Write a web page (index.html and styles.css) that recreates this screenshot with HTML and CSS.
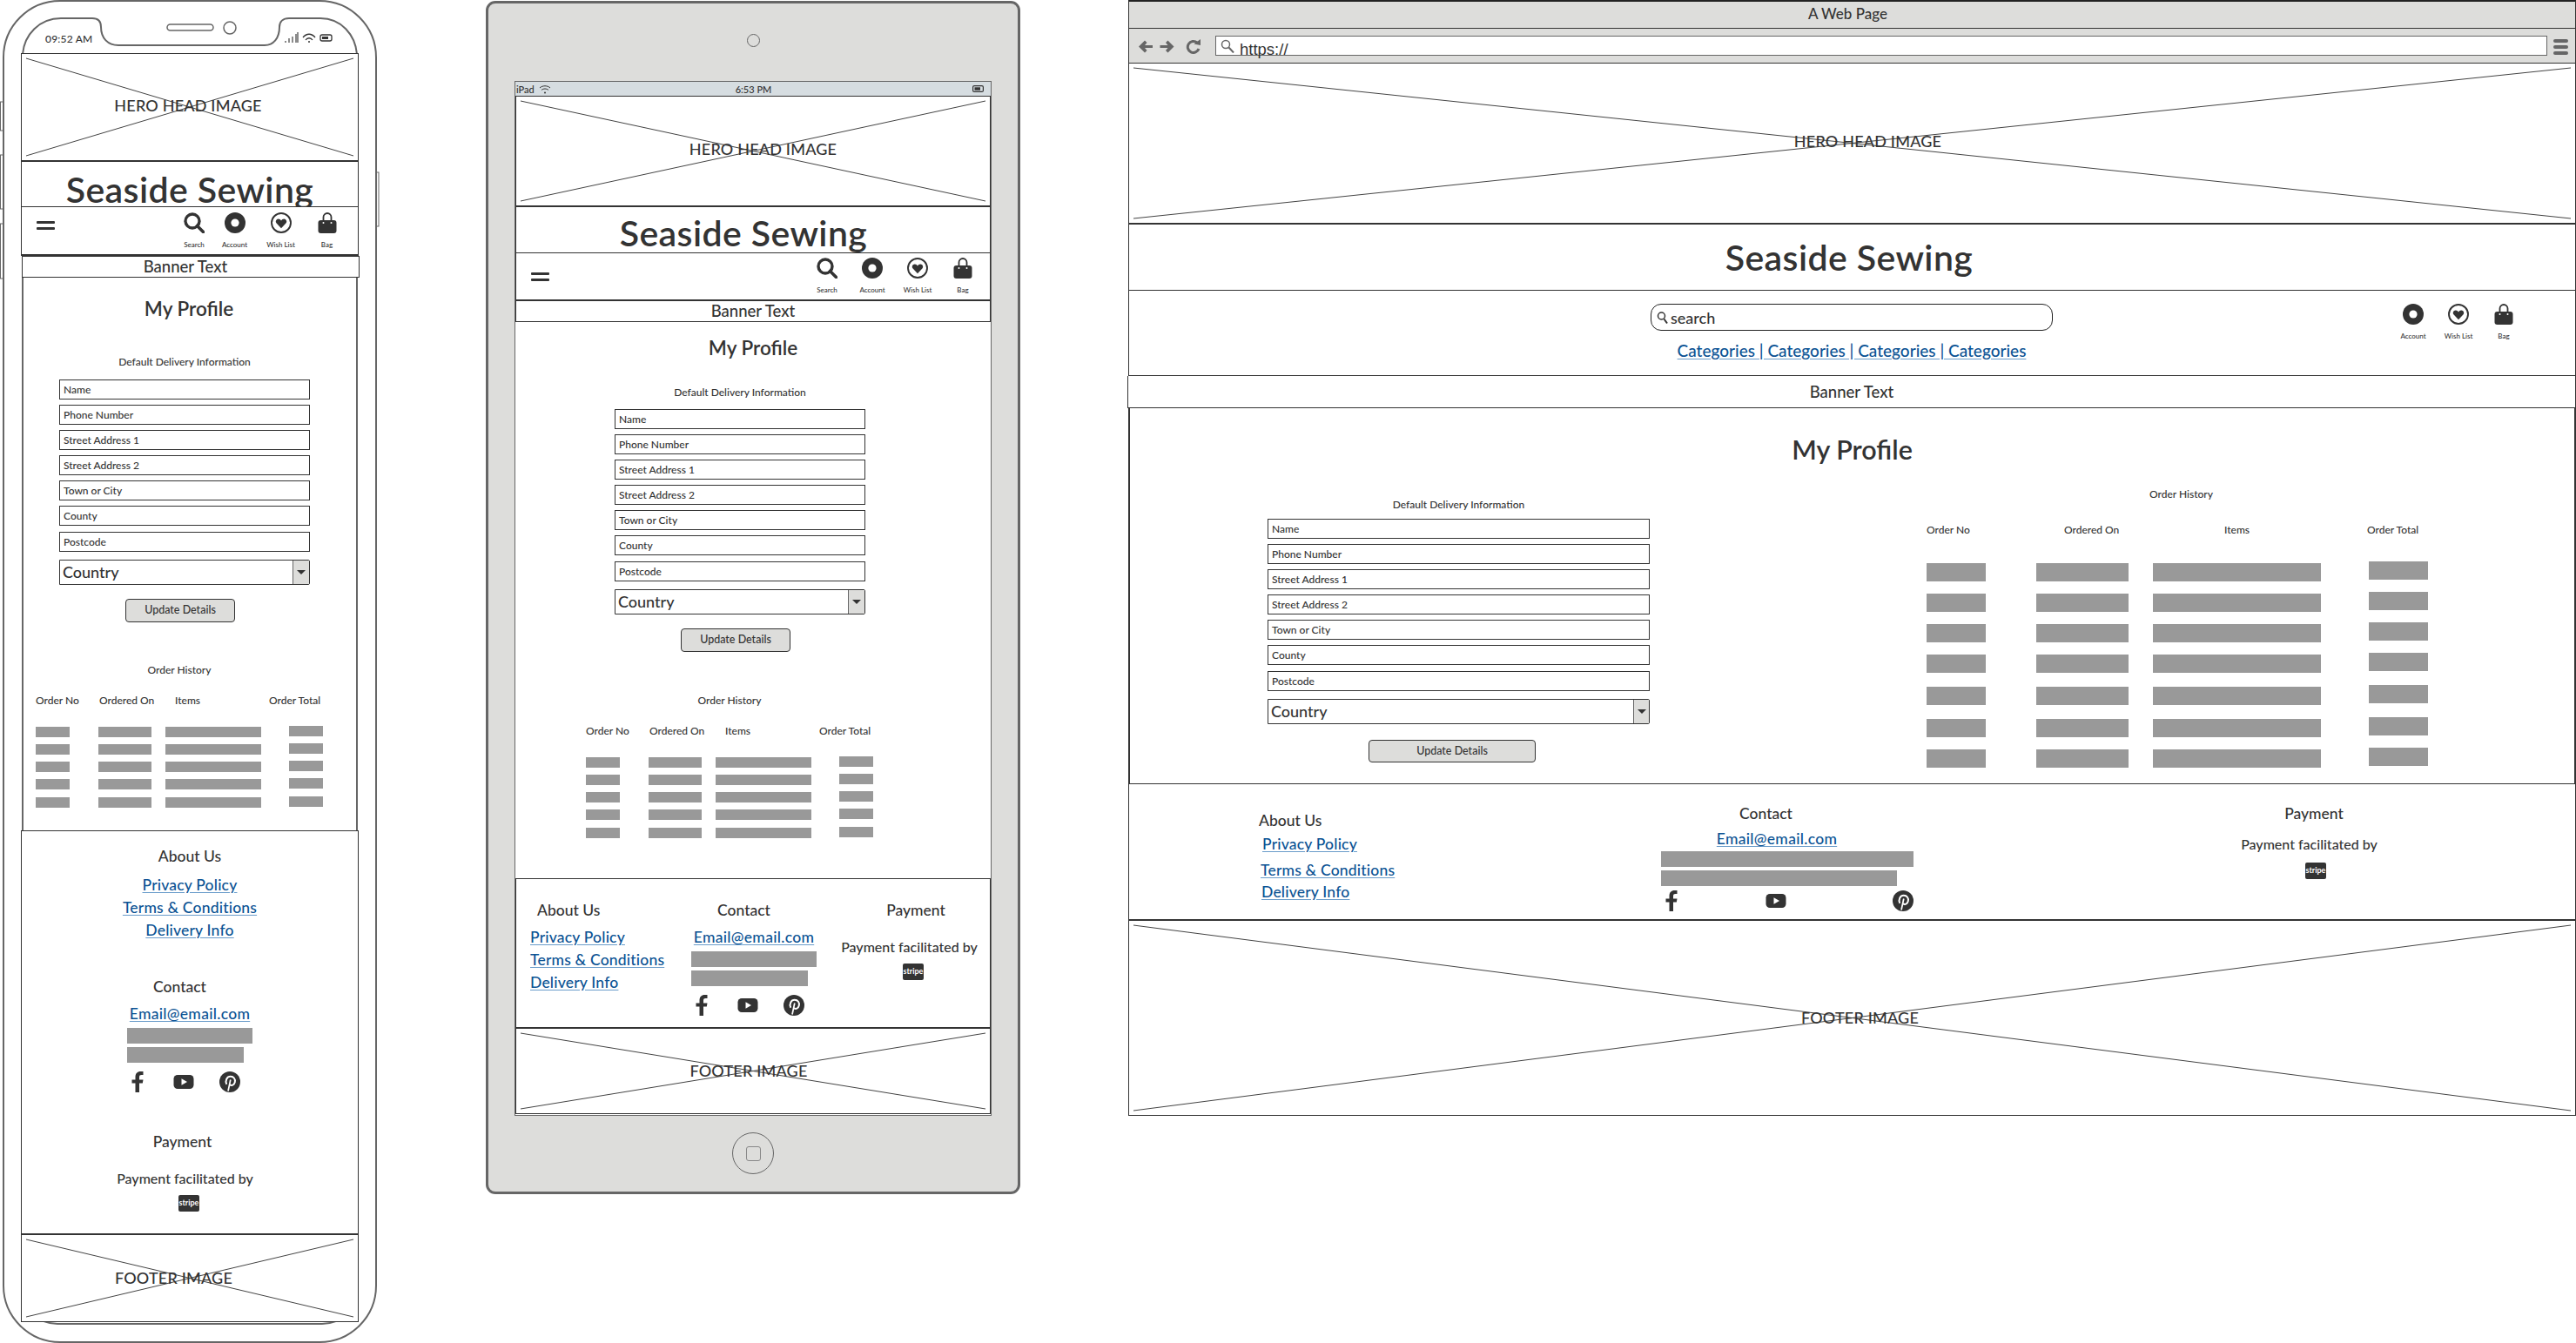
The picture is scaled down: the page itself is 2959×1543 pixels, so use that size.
FILE: index.html
```html
<!DOCTYPE html>
<html lang="en">

<head>
    <meta charset="UTF-8">
    <title>Seaside Sewing - My Profile wireframe</title>
    <link rel="stylesheet" href="styles.css">
</head>

<body>

    <!-- shared icons -->
    <svg class="sprite" width="0" height="0">
        <symbol id="i-search" viewBox="0 0 24 24"><circle cx="10" cy="10" r="8" fill="none" stroke="currentColor" stroke-width="3.4"/><path d="M15.5 15.5 22.5 22.5" stroke="currentColor" stroke-width="3.6" stroke-linecap="round"/></symbol>
        <symbol id="i-account" viewBox="0 0 24 24"><circle cx="12" cy="12" r="12" fill="currentColor"/><circle cx="12" cy="12" r="4.6" fill="#fff"/></symbol>
        <symbol id="i-wish" viewBox="0 0 24 24"><circle cx="12" cy="12" r="11" fill="none" stroke="currentColor" stroke-width="1.9"/><path d="M12 18.2 6.6 12.6C4.8 10.4 6.2 7.4 8.8 7.4 10.2 7.4 11.3 8.2 12 9.4 12.7 8.2 13.8 7.4 15.2 7.4 17.8 7.4 19.2 10.4 17.4 12.6z" fill="currentColor"/></symbol>
        <symbol id="i-bag" viewBox="0 0 22 24"><path d="M6.5 11V5.5a4.5 4.5 0 0 1 9 0V11" fill="none" stroke="currentColor" stroke-width="1.8"/><path d="M3.5 9H18.500C20.500 9 21.500 10 21.500 12V21C21.500 23 20.500 24 18.500 24H3.500C1.500 24 .5 23 .5 21V12C.5 10 1.500 9 3.500 9z" fill="currentColor"/><circle cx="6.500" cy="12" r="1" fill="#fff"/><circle cx="15.500" cy="12" r="1" fill="#fff"/></symbol>
        <symbol id="i-fb" viewBox="0 0 24 24"><path d="M9.500 24V13.500H5.500V9.500H9.500V6.500C9.500 2.300 11.800 0 15.500 0H18.500V4H16.500C14.700 4 14 4.800 14 6.500V9.500H18.500L17.800 13.500H14V24z" fill="currentColor"/></symbol>
        <symbol id="i-yt" viewBox="0 0 24 24"><rect x=".5" y="4" width="23" height="16" rx="4.500" fill="currentColor"/><path d="M9.500 8.300 16 12 9.500 15.700z" fill="#fff"/></symbol>
        <symbol id="i-pin" viewBox="0 0 24 24"><circle cx="12" cy="12" r="12" fill="currentColor"/><path d="M8.300 14.800C6.300 10.600 8.600 5.800 12.800 5.800 16.500 5.800 18.600 8.800 17.800 12.300 17 15.700 14 16.900 11.900 15" fill="none" stroke="#fff" stroke-width="2"/><path d="M12.800 9.500 10 22.500" stroke="#fff" stroke-width="1.700"/></symbol>
    </svg>

    <!-- PHONE -->
    <section class="device phone">
        <svg class="phone-frame" width="436" height="1543" viewBox="0 0 436 1543" fill="none" stroke="#666">
            <rect x="0.500" y="117" width="4" height="33"/><rect x="0.500" y="178" width="4" height="62"/><rect x="0.500" y="257" width="4" height="63"/><rect x="431" y="198" width="4" height="62"/>
            <rect x="4" y="1" width="428" height="1541" rx="65" stroke-width="2" fill="#fff"/>
            <path d="M26 62C28 40 45 21 70 21H106C113 21 116 25 116 31 116 44 124 52 136 52H304C314 52 321 44 321 31 321 25 325 21 332 21H368C392 21 408 40 410 62V1480C410 1505 392 1521 370 1521H66C44 1521 26 1505 26 1480Z" stroke-width="2"/>
            <rect x="192" y="28" width="53" height="7" rx="3.500" stroke-width="1.500"/><circle cx="264" cy="32" r="7" stroke-width="1.500"/>
            <path d="M328 49V47M332 49V44M336 49V42M340 49V39M342 49V37" stroke-width="1.500"/>
            <path d="M348 43C352 38 358 38 362 43M351 46C353 43 357 43 359 46" stroke="#333" stroke-width="1.300"/><circle cx="355" cy="48" r="1" fill="#333" stroke="none"/>
            <rect x="368" y="40" width="13" height="7" rx="2" stroke="#333" stroke-width="1.300"/><rect x="370" y="42" width="7" height="3" fill="#333" stroke="none"/>
        </svg>
        <span class="phone-time">09:52 AM</span>

        <div class="screen">
            <div class="img-box hero">
                <svg class="cross" viewBox="0 0 100 100" preserveAspectRatio="none"><line x1="0" y1="0" x2="100" y2="100"/><line x1="0" y1="100" x2="100" y2="0"/></svg>
                <span class="img-label">HERO HEAD IMAGE</span>
            </div>
            <div class="site-title"><h1>Seaside Sewing</h1></div>
            <nav class="nav">
                <div class="burger"><span></span><span></span></div>
                <div class="nav-items">
                    <div class="nav-item"><svg width="24" height="24"><use href="#i-search"/></svg><span>Search</span></div>
                    <div class="nav-item"><svg width="24" height="24"><use href="#i-account"/></svg><span>Account</span></div>
                    <div class="nav-item"><svg width="24" height="24"><use href="#i-wish"/></svg><span>Wish List</span></div>
                    <div class="nav-item"><svg width="22" height="24"><use href="#i-bag"/></svg><span>Bag</span></div>
                </div>
            </nav>
            <div class="banner">Banner Text</div>
            <main class="main">
                <h2>My Profile</h2>
                <div class="form">
                    <p class="caption">Default Delivery Information</p>
                    <div class="fields">
                        <div class="field">Name</div>
                        <div class="field">Phone Number</div>
                        <div class="field">Street Address 1</div>
                        <div class="field">Street Address 2</div>
                        <div class="field">Town or City</div>
                        <div class="field">County</div>
                        <div class="field">Postcode</div>
                    </div>
                    <div class="select"><span>Country</span><i></i></div>
                    <div class="btn">Update Details</div>
                </div>
                <div class="orders">
                    <p class="caption">Order History</p>
                    <div class="order-head"><span>Order No</span><span>Ordered On</span><span>Items</span><span>Order Total</span></div>
                    <div class="order-bars">
                        <div class="bar-col"><b></b><b></b><b></b><b></b><b></b></div>
                        <div class="bar-col"><b></b><b></b><b></b><b></b><b></b></div>
                        <div class="bar-col"><b></b><b></b><b></b><b></b><b></b></div>
                        <div class="bar-col"><b></b><b></b><b></b><b></b><b></b></div>
                    </div>
                </div>
            </main>
            <footer class="foot">
                <div class="about">
                    <h3>About Us</h3>
                    <a href="#">Privacy Policy</a>
                    <a href="#">Terms &amp; Conditions</a>
                    <a href="#">Delivery Info</a>
                </div>
                <div class="contact">
                    <h3>Contact</h3>
                    <a href="#">Email@email.com</a>
                    <b class="blk"></b>
                    <b class="blk short"></b>
                    <div class="social">
                        <svg width="24" height="24"><use href="#i-fb"/></svg>
                        <svg width="24" height="24"><use href="#i-yt"/></svg>
                        <svg width="24" height="24"><use href="#i-pin"/></svg>
                    </div>
                </div>
                <div class="payment">
                    <h3>Payment</h3>
                    <p>Payment facilitated by</p>
                    <div class="stripe">stripe</div>
                </div>
            </footer>
            <div class="img-box foot-img">
                <svg class="cross" viewBox="0 0 100 100" preserveAspectRatio="none"><line x1="0" y1="0" x2="100" y2="100"/><line x1="0" y1="100" x2="100" y2="0"/></svg>
                <span class="img-label">FOOTER IMAGE</span>
            </div>
        </div>
    </section>

    <!-- TABLET -->
    <section class="device tablet">
        <div class="camera"></div>
        <div class="screen">
            <div class="status">
                <span class="status-left">iPad <svg width="14" height="11" viewBox="0 0 14 11" fill="none" stroke="#333" stroke-width="1"><path d="M1 4C4 1 10 1 13 4M3 6.500C5 4.500 9 4.500 11 6.500"/><circle cx="7" cy="9.500" r="1" fill="#333" stroke="none"/></svg></span>
                <span>6:53 PM</span>
                <svg class="status-batt" width="13" height="8" viewBox="0 0 13 8" fill="none"><rect x=".6" y=".6" width="11.800" height="6.800" rx="1.500" stroke="#333" stroke-width="1.200"/><rect x="2.500" y="2.300" width="6.500" height="3.400" fill="#333"/></svg>
            </div>
            <div class="img-box hero">
                <svg class="cross" viewBox="0 0 100 100" preserveAspectRatio="none"><line x1="0" y1="0" x2="100" y2="100"/><line x1="0" y1="100" x2="100" y2="0"/></svg>
                <span class="img-label">HERO HEAD IMAGE</span>
            </div>
            <div class="site-title"><h1>Seaside Sewing</h1></div>
            <nav class="nav">
                <div class="burger"><span></span><span></span></div>
                <div class="nav-items">
                    <div class="nav-item"><svg width="24" height="24"><use href="#i-search"/></svg><span>Search</span></div>
                    <div class="nav-item"><svg width="24" height="24"><use href="#i-account"/></svg><span>Account</span></div>
                    <div class="nav-item"><svg width="24" height="24"><use href="#i-wish"/></svg><span>Wish List</span></div>
                    <div class="nav-item"><svg width="22" height="24"><use href="#i-bag"/></svg><span>Bag</span></div>
                </div>
            </nav>
            <div class="banner">Banner Text</div>
            <main class="main">
                <h2>My Profile</h2>
                <div class="form">
                    <p class="caption">Default Delivery Information</p>
                    <div class="fields">
                        <div class="field">Name</div>
                        <div class="field">Phone Number</div>
                        <div class="field">Street Address 1</div>
                        <div class="field">Street Address 2</div>
                        <div class="field">Town or City</div>
                        <div class="field">County</div>
                        <div class="field">Postcode</div>
                    </div>
                    <div class="select"><span>Country</span><i></i></div>
                    <div class="btn">Update Details</div>
                </div>
                <div class="orders">
                    <p class="caption">Order History</p>
                    <div class="order-head"><span>Order No</span><span>Ordered On</span><span>Items</span><span>Order Total</span></div>
                    <div class="order-bars">
                        <div class="bar-col"><b></b><b></b><b></b><b></b><b></b></div>
                        <div class="bar-col"><b></b><b></b><b></b><b></b><b></b></div>
                        <div class="bar-col"><b></b><b></b><b></b><b></b><b></b></div>
                        <div class="bar-col"><b></b><b></b><b></b><b></b><b></b></div>
                    </div>
                </div>
            </main>
            <footer class="foot">
                <div class="about">
                    <h3>About Us</h3>
                    <a href="#">Privacy Policy</a>
                    <a href="#">Terms &amp; Conditions</a>
                    <a href="#">Delivery Info</a>
                </div>
                <div class="contact">
                    <h3>Contact</h3>
                    <a href="#">Email@email.com</a>
                    <b class="blk"></b>
                    <b class="blk short"></b>
                    <div class="social">
                        <svg width="24" height="24"><use href="#i-fb"/></svg>
                        <svg width="24" height="24"><use href="#i-yt"/></svg>
                        <svg width="24" height="24"><use href="#i-pin"/></svg>
                    </div>
                </div>
                <div class="payment">
                    <h3>Payment</h3>
                    <p>Payment facilitated by</p>
                    <div class="stripe">stripe</div>
                </div>
            </footer>
            <div class="img-box foot-img">
                <svg class="cross" viewBox="0 0 100 100" preserveAspectRatio="none"><line x1="0" y1="0" x2="100" y2="100"/><line x1="0" y1="100" x2="100" y2="0"/></svg>
                <span class="img-label">FOOTER IMAGE</span>
            </div>
        </div>
        <div class="home-btn"><span></span></div>
    </section>

    <!-- BROWSER -->
    <section class="device browser">
        <div class="title-bar">A Web Page</div>
        <div class="tool-bar">
            <svg class="tool-icons" width="72" height="17" viewBox="0 0 72 17" fill="#666">
                <path d="M0 8.500 7 1.500 9.500 4 7 7H16V10H7L9.500 13 7 15.500z"/>
                <path d="M40.500 8.500 33.500 1.500 31 4 33.500 7H24.500V10H33.500L31 13 33.500 15.500z"/>
                <path d="M67 4A6.500 6.500 0 1 0 69 11" fill="none" stroke="#666" stroke-width="3"/><path d="M63.500 5.500 71 7V0z"/>
            </svg>
            <div class="address">
                <svg width="16" height="16" viewBox="0 0 16 16" fill="none" stroke="#666"><circle cx="6" cy="6" r="4.500" stroke-width="1.500"/><path d="M9.500 9.500 15 15.500" stroke-width="2"/></svg>
                <span>https://</span>
            </div>
            <div class="tool-menu"><span></span><span></span><span></span></div>
        </div>
        <div class="screen">
            <div class="img-box hero">
                <svg class="cross" viewBox="0 0 100 100" preserveAspectRatio="none"><line x1="0" y1="0" x2="100" y2="100"/><line x1="0" y1="100" x2="100" y2="0"/></svg>
                <span class="img-label">HERO HEAD IMAGE</span>
            </div>
            <div class="site-title"><h1>Seaside Sewing</h1></div>
            <nav class="nav">
                <div class="nav-search">
                    <div class="search-box">
                        <svg width="13" height="16" viewBox="0 0 13 16" fill="none" stroke="#333"><circle cx="5.500" cy="6" r="4" stroke-width="1.500"/><path d="M8.500 9.500 12 14.500" stroke-width="2"/></svg>
                        <span>search</span>
                    </div>
                    <a href="#" class="cats">Categories | Categories | Categories | Categories</a>
                </div>
                <div class="nav-items">
                    <div class="nav-item"><svg width="24" height="24"><use href="#i-account"/></svg><span>Account</span></div>
                    <div class="nav-item"><svg width="24" height="24"><use href="#i-wish"/></svg><span>Wish List</span></div>
                    <div class="nav-item"><svg width="22" height="24"><use href="#i-bag"/></svg><span>Bag</span></div>
                </div>
            </nav>
            <div class="banner">Banner Text</div>
            <main class="main">
                <h2>My Profile</h2>
                <div class="columns">
                    <div class="form">
                        <p class="caption">Default Delivery Information</p>
                        <div class="fields">
                            <div class="field">Name</div>
                            <div class="field">Phone Number</div>
                            <div class="field">Street Address 1</div>
                            <div class="field">Street Address 2</div>
                            <div class="field">Town or City</div>
                            <div class="field">County</div>
                            <div class="field">Postcode</div>
                        </div>
                        <div class="select"><span>Country</span><i></i></div>
                        <div class="btn">Update Details</div>
                    </div>
                    <div class="orders">
                        <p class="caption">Order History</p>
                        <div class="order-head"><span>Order No</span><span>Ordered On</span><span>Items</span><span>Order Total</span></div>
                        <div class="order-bars">
                            <div class="bar-col"><b></b><b></b><b></b><b></b><b></b><b></b><b></b></div>
                            <div class="bar-col"><b></b><b></b><b></b><b></b><b></b><b></b><b></b></div>
                            <div class="bar-col"><b></b><b></b><b></b><b></b><b></b><b></b><b></b></div>
                            <div class="bar-col"><b></b><b></b><b></b><b></b><b></b><b></b><b></b></div>
                        </div>
                    </div>
                </div>
            </main>
            <footer class="foot">
                <div class="about">
                    <h3>About Us</h3>
                    <a href="#">Privacy Policy</a>
                    <a href="#">Terms &amp; Conditions</a>
                    <a href="#">Delivery Info</a>
                </div>
                <div class="contact">
                    <h3>Contact</h3>
                    <a href="#">Email@email.com</a>
                    <b class="blk"></b>
                    <b class="blk short"></b>
                    <div class="social">
                        <svg width="24" height="24"><use href="#i-fb"/></svg>
                        <svg width="24" height="24"><use href="#i-yt"/></svg>
                        <svg width="24" height="24"><use href="#i-pin"/></svg>
                    </div>
                </div>
                <div class="payment">
                    <h3>Payment</h3>
                    <p>Payment facilitated by</p>
                    <div class="stripe">stripe</div>
                </div>
            </footer>
            <div class="img-box foot-img">
                <svg class="cross" viewBox="0 0 100 100" preserveAspectRatio="none"><line x1="0" y1="0" x2="100" y2="100"/><line x1="0" y1="100" x2="100" y2="0"/></svg>
                <span class="img-label">FOOTER IMAGE</span>
            </div>
        </div>
    </section>

</body>

</html>
```

FILE: styles.css
```css
* {
    box-sizing: border-box;
}

html,
body {
    margin: 0;
    padding: 0;
    height: 100%;
    background: #fff;
    overflow: hidden;
}

body {
    position: relative;
    font-family: "Lato", "Noto Sans", sans-serif;
    font-weight: 500;
    color: #333;
}

h1, h2, h3, p {
    margin: 0;
    font-weight: 500;
}

a {
    color: #0b5394;
    text-decoration-color: #6a9cca;
    text-underline-offset: 2px;
}

.sprite {
    position: absolute;
}

/* the three devices sit on a free canvas */
.device {
    position: absolute;
    color: #333;
}

.phone {
    left: 0;
    top: 0;
    width: 436px;
    height: 1543px;
}

.tablet {
    left: 558px;
    top: 1px;
    width: 614px;
    height: 1371px;
    background: #dddddb;
    border: 3px solid #666;
    border-radius: 11px;
}

.browser {
    left: 1296px;
    top: 0;
    width: 1663px;
}

/* ---------- device chrome ---------- */
.phone-frame {
    position: absolute;
    left: 0;
    top: 0;
}

.phone-time {
    position: absolute;
    left: 52px;
    top: 37px;
    font-size: 12px;
    line-height: 16px;
    letter-spacing: .2px;
}

.camera {
    width: 15px;
    height: 15px;
    margin: 35px auto 0;
    border: 1px solid #666;
    border-radius: 50%;
}

.home-btn {
    display: flex;
    align-items: center;
    justify-content: center;
    width: 48px;
    height: 48px;
    margin: 19px auto 0;
    border: 1px solid #666;
    border-radius: 50%;
}

.home-btn span {
    width: 17px;
    height: 17px;
    border: 1.5px solid #888;
    border-radius: 3px;
}

.status {
    display: grid;
    grid-template-columns: 1fr auto 1fr;
    align-items: center;
    height: 16px;
    padding-left: 1px;
    background: #d6dde1;
    font-size: 11px;
}

.status-left {
    display: flex;
    align-items: center;
    gap: 5px;
}

.status-batt {
    justify-self: end;
    margin-right: 8px;
}

.title-bar {
    height: 33px;
    padding-left: 780px;
    border: 1px solid #333;
    border-top: 2px solid #222;
    background: #dddddb;
    font-size: 17px;
    line-height: 28px;
}

.tool-bar {
    display: flex;
    align-items: flex-start;
    height: 40px;
    padding: 8px 0 0 11px;
    border: 1px solid #333;
    border-top: 0;
    background: #dddddb;
}

.tool-icons {
    margin-top: 4px;
}

.address {
    display: flex;
    align-items: flex-start;
    flex: 0 0 1530px;
    height: 23px;
    margin-left: 16px;
    padding: 3px 0 0 5px;
    border: 1px solid #666;
    background: #fff;
}

.address span {
    margin: 3px 0 0 6px;
    font-family: "Liberation Sans", sans-serif;
    font-size: 18.500px;
    line-height: 18px;
    font-weight: 400;
}

.tool-menu {
    display: flex;
    flex-direction: column;
    gap: 3px;
    width: 17px;
    margin: 4px 0 0 7px;
}

.tool-menu span {
    height: 4px;
    border-radius: 2px;
    background: #666;
}

/* ---------- screen sections ---------- */
.screen {
    position: relative;
    display: flex;
    flex-direction: column;
}

.img-box {
    position: relative;
    display: flex;
    align-items: center;
    justify-content: center;
    background: #fff;
    border: 1px solid #333;
    border-top: 0;
}

.cross {
    position: absolute;
    left: 5px;
    top: 5px;
    width: calc(100% - 10px);
    height: calc(100% - 10px);
    overflow: visible;
}

.cross line {
    stroke: #444;
    stroke-width: 1;
    vector-effect: non-scaling-stroke;
}

.img-label {
    position: relative;
    margin-bottom: 2px;
    font-size: 18px;
    line-height: 24px;
    letter-spacing: .2px;
}

.hero {
    border-bottom: 2px solid #333;
}

.hero .img-label {
    margin-bottom: 5px;
}

.site-title {
    background: #fff;
    border: 1px solid #333;
    border-top: 0;
    text-align: center;
}

.site-title h1 {
    font-size: 41px;
    font-weight: 600;
    line-height: 52px;
    letter-spacing: .4px;
    white-space: nowrap;
}

.nav {
    display: flex;
    background: #fff;
    border: 1px solid #333;
    border-top: 0;
    border-bottom-width: 2px;
}

.burger {
    display: flex;
    flex-direction: column;
    gap: 4px;
    width: 21px;
}

.burger span {
    height: 3px;
    border-radius: 1px;
    background: #333;
}

.nav-items {
    display: flex;
    margin-left: auto;
}

.nav-item {
    display: flex;
    flex-direction: column;
    align-items: center;
    width: 53px;
}

.nav-item svg {
    flex: none;
}

.nav-item span {
    margin-top: 8px;
    font-size: 8px;
    line-height: 10px;
    white-space: nowrap;
}

.banner {
    background: #fff;
    border: 1px solid #333;
    border-top: 0;
    font-size: 18.500px;
    text-align: center;
}

h2 {
    font-size: 22.500px;
    font-weight: 600;
    line-height: 30px;
    text-align: center;
}

.caption {
    font-size: 12px;
    line-height: 16px;
    text-align: center;
}

.field {
    height: 23px;
    padding-left: 4px;
    border: 1px solid #333;
    font-size: 12px;
    line-height: 21px;
}

.fields {
    display: flex;
    flex-direction: column;
    gap: 6px;
}

.field:last-child {
    margin-top: 1px;
}

.select {
    display: flex;
    justify-content: space-between;
    height: 29px;
    margin-top: 9px;
    padding-left: 3px;
    border: 1px solid #333;
    border-radius: 0 2px 2px 0;
    font-size: 18px;
    line-height: 26px;
}

.select i {
    display: flex;
    align-items: center;
    justify-content: center;
    width: 19px;
    background: #dddddb;
    border-left: 1px solid #666;
}

.select i::after {
    content: "";
    border-top: 5px solid #333;
    border-left: 5px solid transparent;
    border-right: 5px solid transparent;
}

.btn {
    height: 27px;
    margin-top: 16px;
    background: #dddddb;
    border: 1px solid #333;
    border-radius: 4px;
    font-size: 12.500px;
    line-height: 23px;
    text-align: center;
}

.orders {
    width: 330px;
}

.order-head {
    display: flex;
    margin-top: 20px;
    font-size: 12px;
    line-height: 14px;
    white-space: nowrap;
}

.order-head span:nth-child(1) { width: 73px; }
.order-head span:nth-child(2) { width: 87px; }
.order-head span:nth-child(3) { width: 108px; }

.order-bars {
    display: flex;
    margin-top: 23px;
}

.bar-col {
    display: flex;
    flex-direction: column;
    gap: 8px;
    width: 39px;
}

.bar-col b {
    height: 12px;
    background: #999;
}

.bar-col b:last-child {
    margin-top: 1px;
}

.bar-col:nth-child(2) { width: 61px; margin-left: 33px; }
.bar-col:nth-child(3) { width: 110px; margin-left: 16px; }
.bar-col:nth-child(4) { margin-left: 32px; margin-top: -1px; }

/* footer */
.foot {
    background: #fff;
    border: 1px solid #333;
    border-top: 1px solid #333;
    border-bottom-width: 2px;
    font-size: 17.500px;
}

.foot h3 {
    font-size: 17.500px;
    line-height: 24px;
    white-space: nowrap;
}

.about,
.contact,
.payment {
    display: flex;
    flex-direction: column;
}

.about a {
    line-height: 26px;
    letter-spacing: .2px;
    white-space: nowrap;
}

.about h3 {
    margin-bottom: 8px;
}

.contact {
    width: 144px;
    text-align: center;
}

.contact h3 {
    padding-right: 23px;
}

.contact a {
    margin-top: 6px;
    line-height: 26px;
    letter-spacing: .3px;
    white-space: nowrap;
}

.blk {
    display: block;
    flex: none;
    height: 18px;
    margin-top: 3px;
    background: #999;
}

.blk.short {
    width: 134px;
    margin-top: 4px;
}

.social {
    display: flex;
    gap: 29px;
    margin-top: 10px;
}

.payment {
    width: 157px;
    white-space: nowrap;
}

.payment p {
    margin-top: 19px;
    font-size: 16px;
    line-height: 22px;
    text-align: center;
}

.stripe {
    width: 24px;
    height: 19px;
    margin: 8px 0 0 71px;
    background: #333;
    border-radius: 2px;
    color: #fff;
    font-size: 9px;
    font-weight: 700;
    line-height: 18px;
    text-align: center;
}

/* ---------- phone ---------- */
.phone .screen {
    position: absolute;
    left: 24px;
    top: 61px;
    width: 388px;
}

.phone .hero { height: 125px; border-top: 1px solid #333; }
.phone .hero .img-label { margin-right: 4px; }
.phone .site-title { height: 52px; }
.phone .site-title h1 { padding-top: 6px; }
.phone .nav { height: 56px; padding-top: 6px; }
.phone .burger { margin: 10px 0 0 17px; }
.phone .nav-item:first-child { width: 40px; }
.phone .nav-items { margin-right: 9px; }
.phone .banner { height: 25px; margin: 0 -1px 0 1px; padding-right: 12px; line-height: 23px; border-top: 1px solid #333; }
.phone .main { height: 635px; padding-top: 21px; }
.phone h2 { padding-right: 2px; }
.phone .form { width: 288px; margin: 38px 0 0 44px; }
.phone .fields { margin-top: 12px; }
.phone .btn { width: 126px; margin-left: 76px; }
.phone .orders { margin: 47px 0 0 17px; }
.phone .foot { display: flex; flex-direction: column; align-items: center; height: 465px; padding: 17px 0 0; }
.phone .about { align-items: center; }
.phone .contact { margin-top: 40px; }
.phone .payment { margin: 45px 11px 0 0; }
.phone .payment h3 { text-align: center; padding-right: 6px; }
.phone .foot-img { height: 100px; }
.phone .foot-img .img-label { margin-right: 37px; }

/* ---------- tablet ---------- */
.tablet .screen {
    width: 548px;
    height: 1189px;
    margin: 39px 0 0 30px;
    background: #fff;
    border: 1px solid #666;
}

.tablet .hero { height: 128px; border-top: 1px solid #333; }
.tablet .hero .img-label { margin-left: 23px; }
.tablet .site-title { height: 53px; }
.tablet .site-title h1 { padding: 4px 22px 0 0; }
.tablet .nav { height: 55px; padding-top: 5px; }
.tablet .burger { margin: 17px 0 0 17px; }
.tablet .nav-item { width: 52px; }
.tablet .nav-items { margin-right: 5px; }
.tablet .banner { height: 24px; line-height: 23px; }
.tablet .main { height: 639px; padding-top: 15px; }
.tablet .form { width: 288px; margin: 28px 0 0 114px; }
.tablet .fields { margin-top: 11px; }
.tablet .btn { width: 126px; margin-left: 76px; }
.tablet .orders { margin: 48px 0 0 81px; }
.tablet .foot { display: flex; height: 173px; padding: 24px 0 0 16px; }
.tablet .about { width: 185px; }
.tablet .about h3 { margin: 0 0 6px 8px; }
.tablet .contact { width: 144px; margin-right: 28px; }
.tablet .payment h3 { padding-left: 15px; text-align: center; }
.tablet .foot-img { height: 98px; }
.tablet .foot-img .img-label { margin-right: 10px; }

/* ---------- browser ---------- */
.browser .screen {
    width: 1663px;
}

.browser .hero { height: 185px; }
.browser .hero .img-label { margin-left: 36px; }
.browser .site-title { height: 76px; }
.browser .site-title h1 { padding: 12px 7px 0 0; }
.browser .nav { height: 98px; padding-top: 15px; border-bottom-width: 1px; }
.browser .nav-search { width: 462px; margin-left: 599px; }
.browser .search-box { display: flex; align-items: center; gap: 3px; height: 31px; padding-left: 6px; border: 1.500px solid #222; border-radius: 12px; font-size: 18px; }
.browser .cats { display: block; margin-top: 11px; font-size: 19px; line-height: 24px; text-align: center; white-space: nowrap; }
.browser .nav-item { width: 52px; }
.browser .nav-items { margin-right: 56px; }
.browser .banner { height: 37px; line-height: 36px; margin-left: -1px; }
.browser .main { height: 431px; padding-top: 27px; border: 1px solid #333; border-width: 0 2px; background: #fff; }
.browser h2 { font-size: 30.500px; line-height: 40px; }
.browser .columns { display: flex; }
.browser .form { width: 439px; margin: 36px 0 0 158px; }
.browser .fields { margin-top: 8px; }
.browser .select i { width: 18px; }
.browser .btn { width: 192px; height: 26px; margin: 17.500px 0 0 116px; line-height: 23px; }
.browser .orders { width: 576px; margin: 24px 0 0 318px; }
.browser .orders .caption { padding-left: 9px; }
.browser .order-head { margin-top: 25.500px; }
.browser .order-head span:nth-child(1) { width: 158px; }
.browser .order-head span:nth-child(2) { width: 184px; }
.browser .order-head span:nth-child(3) { width: 164px; }
.browser .order-bars { margin-top: 31.500px; }
.browser .bar-col { gap: 14px; width: 68px; }
.browser .bar-col b { height: 21px; }
.browser .bar-col b:last-child { margin-top: 0; }
.browser .bar-col b:nth-child(5),
.browser .bar-col b:nth-child(6) { margin-top: 2px; }
.browser .bar-col:nth-child(2) { width: 106px; margin-left: 58px; }
.browser .bar-col:nth-child(3) { width: 193px; margin-left: 28px; }
.browser .bar-col:nth-child(4) { margin-left: 55px; margin-top: -2px; }
.browser .foot { display: flex; height: 158px; padding-left: 149px; }
.browser .about { width: 462px; padding-top: 30px; }
.browser .about h3 { margin-bottom: 3px; }
.browser .about a { line-height: 24px; margin-left: 4px; }
.browser .about a:nth-of-type(2) { margin: 6px 0 0 2px; }
.browser .about a:nth-of-type(3) { margin: 1px 0 0 3px; }
.browser .contact { width: 290px; padding-top: 22px; }
.browser .contact h3 { padding-right: 49px; }
.browser .contact a { margin-top: 4px; padding-right: 24px; }
.browser .blk { margin-top: 1px; }
.browser .blk.short { width: 271px; margin-top: 4px; }
.browser .social { gap: 96px; margin-top: 5px; }
.browser .social svg:last-child { margin-left: 26px; }
.browser .payment { margin-left: 376px; padding-top: 22px; }
.browser .payment h3 { padding-left: 11px; text-align: center; }
.browser .payment p { margin-top: 12px; }
.browser .stripe { margin: 10px 0 0 74px; }
.browser .foot-img { height: 224px; }
.browser .foot-img .img-label { margin-left: 18px; }
```
